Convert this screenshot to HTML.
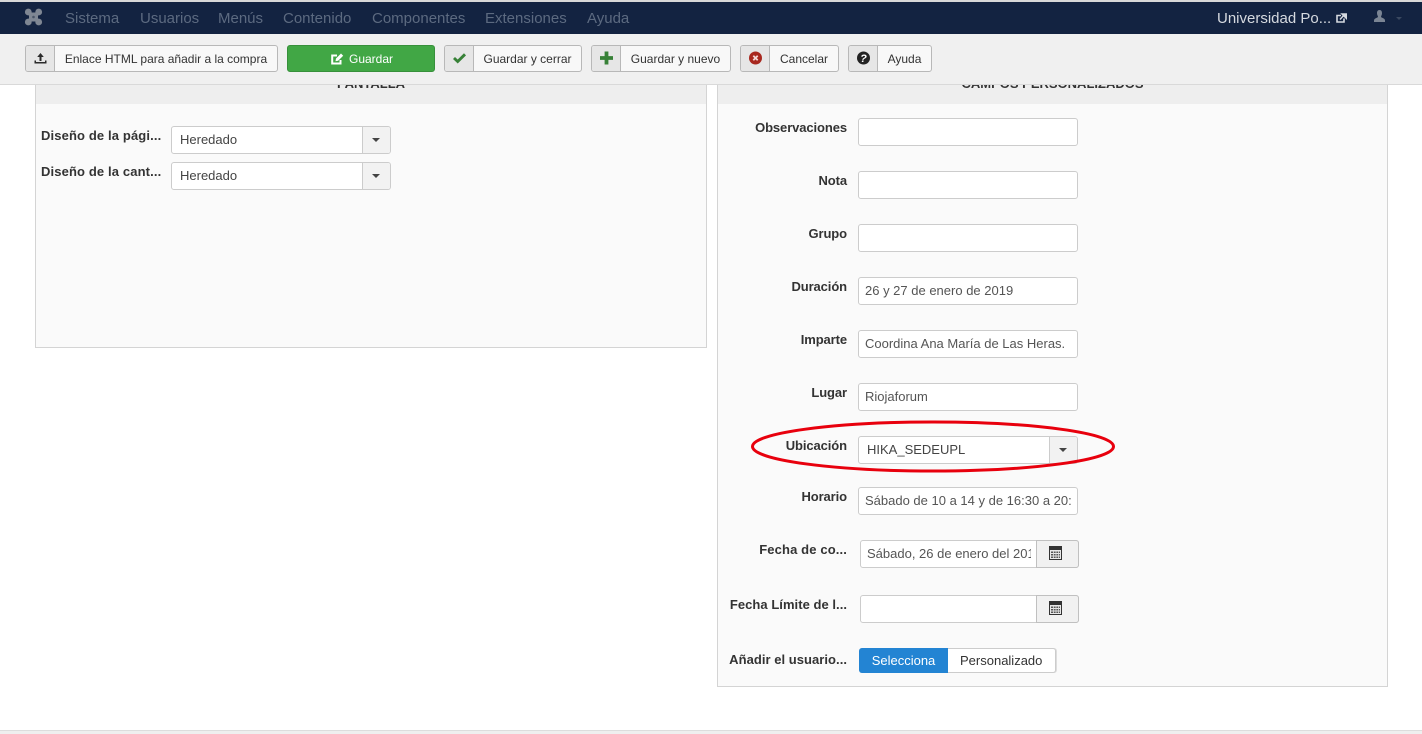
<!DOCTYPE html>
<html lang="es"><head><meta charset="utf-8"><title>Joomla</title>
<style>
*{box-sizing:border-box}
html,body{margin:0;padding:0;width:1422px;height:734px;overflow:hidden;background:#fff;font-family:"Liberation Sans",Arial,sans-serif;font-size:12px;color:#333}
.a{position:absolute;white-space:nowrap}
#nav{left:0;top:2px;width:1422px;height:32px;background:#132341}
#top{left:0;top:0;width:1422px;height:2px;background:#d8d8d8}
.m{top:11px;font-size:15px;line-height:16px;color:#5c6a80}
#bar{left:0;top:34px;width:1422px;height:51px;background:#f0f0f0;border-bottom:1px solid #d9d9d9;z-index:3}
.btn{top:11px;height:27px;background:#f8f8f8;border:1px solid #b8b8b8;border-radius:3px;line-height:26px;font-size:12px;color:#333;text-align:center}
.btn i{position:absolute;left:0;top:0;width:29px;height:25px;background:#e6e6e6;border-right:1px solid #b8b8b8;border-radius:2px 0 0 2px}
.btn i svg{position:absolute;left:6px;top:4px}
.btn span{position:absolute;left:29px;right:0;top:0;text-align:center}
.panel{background:#fafafa;border:1px solid #d4d4d4;border-top:0}
.phead{background:#eee;height:26px;text-align:center;font-weight:bold;font-size:13px;color:#333;line-height:12px;overflow:hidden}
.l{font-weight:bold;font-size:13px;letter-spacing:.13px;line-height:16px;color:#333;text-align:right}
.s{letter-spacing:-.1px}
.t{letter-spacing:.04px}
.in{height:28px;background:#fff;border:1px solid #ccc;border-radius:3px;font-size:13px;line-height:26px;padding-left:6px;color:#555;overflow:hidden}
.sel{height:28px;background:#fff;border:1px solid #ccc;border-radius:3px;font-size:13px;line-height:26px;padding-left:8px;color:#444}
.sel b{position:absolute;right:0;top:0;width:28px;height:26px;background:#f2f2f2;border-left:1px solid #ccc;border-radius:0 2px 2px 0}
.sel b:after{content:"";position:absolute;left:9px;top:11px;border:4px solid transparent;border-top-color:#444;border-bottom:0}
.cal{position:absolute;right:-1px;top:-1px;width:43px;height:28px;background:#f1f1f1;border:1px solid #c0c0c0;border-radius:0 3px 3px 0}
.cal svg{position:absolute;left:11px;top:4px}
</style></head><body>
<div class="a" id="top"></div>
<div class="a" id="nav"></div>
<svg class="a" style="left:24px;top:8px" width="19" height="18" viewBox="0 0 19 18"><g fill="none" stroke="#7f8793" stroke-width="4"><path d="M3 3 16 15M16 3 3 15"/><path d="M6.500 6h6v6h-6z" stroke-width="3"/></g><g fill="#7f8793"><circle cx="4.300" cy="4" r="3.400"/><circle cx="14.700" cy="4" r="3.400"/><circle cx="4.300" cy="14" r="3.400"/><circle cx="14.700" cy="14" r="3.400"/></g><circle cx="9.500" cy="9" r="1.300" fill="#4a5568"/></svg>
<div class="a m" style="left:65px">Sistema</div>
<div class="a m" style="left:140px">Usuarios</div>
<div class="a m" style="left:218px">Menús</div>
<div class="a m" style="left:283px">Contenido</div>
<div class="a m" style="left:372px">Componentes</div>
<div class="a m" style="left:485px">Extensiones</div>
<div class="a m" style="left:587px">Ayuda</div>
<div class="a m" style="left:1217px;color:#d5d9df">Universidad Po...</div>
<svg class="a" style="left:1336px;top:13px" width="11" height="10" viewBox="0 0 11 10"><path d="M8 5.500V9H1V2.500h4" fill="none" stroke="#d5d9df" stroke-width="1.600"/><path d="M4 6.500 8.500 1.500M6 1h4.500v4.500z" stroke="#d5d9df" stroke-width="1.500" fill="#d5d9df"/></svg>
<svg class="a" style="left:1373px;top:10px" width="13" height="13" viewBox="0 0 13 13"><path d="M6.500 0C4.500 0 4 1.700 4 3.200 4 5 5 6 5 6.800 5 8 1 8 1 10.500V12h11v-1.500C12 8 8 8 8 6.800 8 6 9 5 9 3.200 9 1.700 8.500 0 6.500 0z" fill="#7b8594"/></svg>
<div class="a" style="left:1396px;top:17px;border:3px solid transparent;border-top-color:#3a4860;border-bottom:0"></div>

<div class="a" id="bar">
<div class="a btn" style="left:25px;width:253px"><i><svg width="17" height="17" viewBox="0 0 17 17"><path d="M8.500 3 5.200 7h2.300v4h2V7h2.300zM2.500 10.500v3h12v-3h-1.500v1.500H4v-1.500z" fill="#2b2b2b"/></svg></i><span>Enlace HTML para añadir a la compra</span></div>
<div class="a btn" style="left:287px;width:148px;padding-left:2px;background:#41a745;border-color:#37903b;color:#fff"><svg style="vertical-align:-2px;margin-right:5px" width="13" height="12" viewBox="0 0 13 12"><path d="M9.500 7v3.500H1.200V2.500H6" fill="none" stroke="#fff" stroke-width="2"/><path d="M4.500 8.200 5 5.500 10 .5l2.200 2.200-5 5z" fill="#fff"/></svg>Guardar</div>
<div class="a btn" style="left:444px;width:138px"><i><svg width="17" height="17" viewBox="0 0 17 17"><path d="M3 8 6.700 11.500 14 4.300" fill="none" stroke="#378137" stroke-width="2.900"/></svg></i><span>Guardar y cerrar</span></div>
<div class="a btn" style="left:591px;width:140px"><i><svg width="17" height="17" viewBox="0 0 17 17"><path d="M8.500 1.500v13M2 8h13" stroke="#378137" stroke-width="3.800"/></svg></i><span>Guardar y nuevo</span></div>
<div class="a btn" style="left:740px;width:99px"><i><svg width="17" height="17" viewBox="0 0 17 17"><circle cx="8.500" cy="8" r="6.500" fill="#a8281f"/><path d="M6.300 5.800l4.400 4.400M10.700 5.800l-4.400 4.400" stroke="#f3d9d7" stroke-width="1.800"/></svg></i><span>Cancelar</span></div>
<div class="a btn" style="left:848px;width:84px"><i><svg width="17" height="17" viewBox="0 0 17 17"><circle cx="8.500" cy="8" r="6.500" fill="#222"/><text x="8.500" y="12" text-anchor="middle" font-size="11" font-weight="bold" fill="#fff" font-family="Liberation Sans">?</text></svg></i><span>Ayuda</span></div>
</div>

<div class="a panel" style="left:35px;top:78px;width:672px;height:270px"><div class="phead">PANTALLA</div></div>
<div class="a l" style="left:41px;top:128px">Diseño de la pági...</div>
<div class="a sel" style="left:171px;top:126px;width:220px">Heredado<b></b></div>
<div class="a l" style="left:41px;top:164px">Diseño de la cant...</div>
<div class="a sel" style="left:171px;top:162px;width:220px">Heredado<b></b></div>

<div class="a panel" style="left:717px;top:78px;width:671px;height:609px"><div class="phead">CAMPOS PERSONALIZADOS</div></div>

<div class="a l s" style="right:575px;top:120px">Observaciones</div><div class="a in" style="left:858px;top:118px;width:220px"></div>
<div class="a l s" style="right:575px;top:173px">Nota</div><div class="a in" style="left:858px;top:171px;width:220px"></div>
<div class="a l s" style="right:575px;top:226px">Grupo</div><div class="a in" style="left:858px;top:224px;width:220px"></div>
<div class="a l s" style="right:575px;top:279px">Duración</div><div class="a in" style="left:858px;top:277px;width:220px">26 y 27 de enero de 2019</div>
<div class="a l s" style="right:575px;top:332px">Imparte</div><div class="a in" style="left:858px;top:330px;width:220px">Coordina Ana María de Las Heras.</div>
<div class="a l s" style="right:575px;top:385px">Lugar</div><div class="a in" style="left:858px;top:383px;width:220px">Riojaforum</div>
<div class="a l s" style="right:575px;top:438px">Ubicación</div><div class="a sel" style="left:858px;top:436px;width:220px">HIKA_SEDEUPL<b></b></div>
<div class="a l s" style="right:575px;top:489px">Horario</div><div class="a in" style="left:858px;top:487px;width:220px"><span style="display:block;width:207px;overflow:hidden">Sábado de 10 a 14 y de 16:30 a 20:30</span></div>
<div class="a l" style="right:575px;top:542px">Fecha de co...</div>
<div class="a in" style="left:860px;top:540px;width:219px;overflow:visible"><span style="display:block;width:164px;overflow:hidden">Sábado, 26 de enero del 2019</span><div class="cal"><svg width="15" height="16" viewBox="0 0 15 16"><path d="M1.500 1.500h12v13h-12z" fill="#e8e8e8" stroke="#333" stroke-width="1"/><path d="M1 1h13v4H1z" fill="#333"/><path d="M3 6.500h9v1.500H3zM3 9h9v1.500H3zM3 11.500h9V13H3z" fill="#555"/><path d="M5.500 6.500v6.500M8 6.500v6.500M10.500 6.500v6.500" stroke="#ddd" stroke-width=".8"/></svg></div></div>
<div class="a l t" style="right:575px;top:597px">Fecha Límite de l...</div>
<div class="a in" style="left:860px;top:595px;width:219px;overflow:visible"><div class="cal"><svg width="15" height="16" viewBox="0 0 15 16"><path d="M1.500 1.500h12v13h-12z" fill="#e8e8e8" stroke="#333" stroke-width="1"/><path d="M1 1h13v4H1z" fill="#333"/><path d="M3 6.500h9v1.500H3zM3 9h9v1.500H3zM3 11.500h9V13H3z" fill="#555"/><path d="M5.500 6.500v6.500M8 6.500v6.500M10.500 6.500v6.500" stroke="#ddd" stroke-width=".8"/></svg></div></div>
<div class="a l t" style="right:575px;top:652px">Añadir el usuario...</div>
<div class="a" style="left:859px;top:648px;width:197px;height:25px;background:#fff;border:1px solid #ccc;border-left:0;border-radius:3px;box-shadow:1px 0 0 #ddd;line-height:23px;font-size:13px;color:#333"><span class="a" style="left:0;top:-1px;width:89px;height:25px;line-height:25px;background:#2384d3;border:0;color:#fff;text-align:center;border-radius:3px 0 0 3px">Selecciona</span><span class="a" style="left:101px;top:0">Personalizado</span></div>

<svg class="a" style="left:745px;top:416px" width="375" height="62" viewBox="0 0 375 62"><ellipse cx="188" cy="30.500" rx="180.500" ry="24.500" fill="none" stroke="#e8000d" stroke-width="3"/></svg>

<div class="a" style="left:0;top:730px;width:1422px;height:4px;background:#efefef;border-top:1px solid #ddd"></div>
</body></html>
